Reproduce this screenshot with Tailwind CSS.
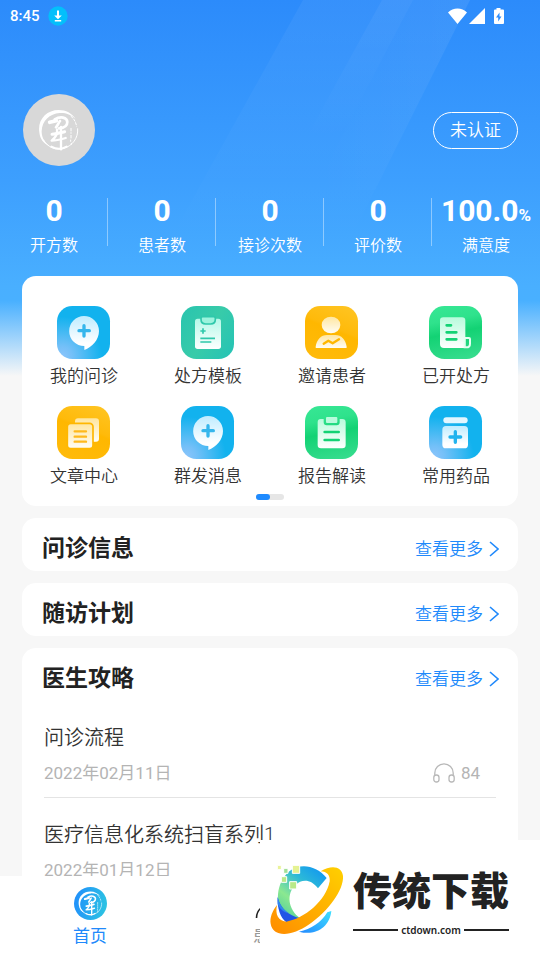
<!DOCTYPE html>
<html lang="zh-CN">
<head>
<meta charset="utf-8">
<meta name="viewport" content="width=device-width, initial-scale=1">
<title>首页</title>
<script src="https://cdn.jsdelivr.net/npm/@tailwindcss/browser@4"></script>
</head>
<body class="relative flex h-screen flex-col overflow-hidden bg-[#f7f7f7] font-[Roboto,'Noto_Sans_CJK_SC',sans-serif] text-[#333333]">

<!-- shared gradients and symbols -->
<svg class="absolute size-0" aria-hidden="true">
  <defs>
    <radialGradient id="blue" cx="0.1" cy="0.95" r="0.75"><stop offset="0" stop-color="#8ac4fb"/><stop offset="0.25" stop-color="#74c0f8"/><stop offset="1" stop-color="#12b2ee"/></radialGradient>
    <linearGradient id="teal" x1="0" y1="0.2" x2="1" y2="0.8"><stop offset="0" stop-color="#2bc5ae"/><stop offset="0.5" stop-color="#38cba9"/><stop offset="1" stop-color="#27c4b4"/></linearGradient>
    <linearGradient id="amber" x1="0.3" y1="1" x2="0.7" y2="0"><stop offset="0" stop-color="#ffba0a"/><stop offset="0.55" stop-color="#ffb700"/><stop offset="0.6" stop-color="#ffba0a"/><stop offset="1" stop-color="#ffc31f"/></linearGradient>
    <linearGradient id="green" x1="0.4" y1="0" x2="0.6" y2="1"><stop offset="0" stop-color="#35e693"/><stop offset="0.25" stop-color="#2fe28c"/><stop offset="0.5" stop-color="#13d274"/><stop offset="1" stop-color="#35dc8d"/></linearGradient>
    <linearGradient id="fBlue" x1="0" y1="0" x2="0" y2="1"><stop offset="0" stop-color="#bfecff"/><stop offset="0.8" stop-color="#fff"/></linearGradient>
    <linearGradient id="fTeal" x1="0" y1="0" x2="0" y2="1"><stop offset="0" stop-color="#b4f8e8"/><stop offset="1" stop-color="#fff"/></linearGradient>
    <linearGradient id="fAmber" x1="0" y1="0" x2="0" y2="1"><stop offset="0" stop-color="#ffe6a0"/><stop offset="1" stop-color="#fffdf5"/></linearGradient>
    <linearGradient id="fGreen" x1="0" y1="0" x2="0" y2="1"><stop offset="0" stop-color="#b8fbdc"/><stop offset="1" stop-color="#fff"/></linearGradient>
    <linearGradient id="home" x1="0" y1="0.4" x2="1" y2="0.6"><stop offset="0" stop-color="#2190fb"/><stop offset="1" stop-color="#2cc4e2"/></linearGradient>
  </defs>
  <symbol id="seal" viewBox="0 0 126 126">
    <path d="M4 70C-2 32 26 3 62 3c22 0 40 10 51 27C99 16 82 11 65 12 35 14 12 36 11 66c-1 20 11 37 25 46C17 105 6 90 4 70z" fill="#fff"/>
    <path d="M16 92c13 24 39 33 62 26 25-8 43-30 41-60" fill="none" stroke="#fff" stroke-width="3"/>
    <path d="M40 113c14 8 32 8 46 0" fill="none" stroke="#fff" stroke-width="6" stroke-linecap="round"/>
    <path d="M98 21c10 7 16 19 18 32" fill="none" stroke="#fff" stroke-width="3" stroke-dasharray="9 3"/>
    <g fill="none" stroke="#fff" stroke-linecap="round" stroke-linejoin="round">
      <path d="M35 40l20-5" stroke-width="11"/>
      <path d="M50 31c18-10 37-6 38 8 0 12-9 18-25 19" stroke-width="8"/>
      <path d="M66 36c-5 6-6 12-12 19" stroke-width="8"/>
      <path d="M42 76c12 0 24-5 38-8" stroke-width="9"/>
      <path d="M57 62c2 12-5 24-16 33 14 0 28-4 42-8" stroke-width="7"/>
      <path d="M69 54v67" stroke-width="7"/>
      <path d="M99 58v8m0 5v2m0 6v8m-1 6v4m2 6v3" stroke-width="3"/>
    </g>
  </symbol>
  <symbol id="bubble" viewBox="0 0 159 159" preserveAspectRatio="xMinYMid meet">
    <rect width="159" height="159" rx="46" fill="url(#blue)"/>
    <path d="M81 30a45 45 0 0 1 45 45c0 27-21 48-44 57v-12A45 45 0 1 1 81 30z" fill="url(#fBlue)"/>
    <path d="M81 59v31M66 74h31" stroke="#35b6ec" stroke-width="10" stroke-linecap="round"/>
  </symbol>
  <symbol id="chevron" viewBox="0 0 10 16"><path d="M1 1l8 7-8 7" fill="none" stroke="#2089fb" stroke-width="1.6"/></symbol>
</svg>

<main class="relative min-h-0 flex-1 overflow-hidden">
  <div class="absolute inset-x-0 top-0 h-[376px] bg-[linear-gradient(180deg,#2c8bfb_0%,#3d9ffe_48%,#49afff_76%,#49b0ff_80%,#f7f7f7_100%)]" aria-hidden="true">
    <svg class="h-[270px] w-full" viewBox="0 0 540 270" preserveAspectRatio="none">
      <defs>
        <linearGradient id="ray" x1="0" y1="0" x2="0" y2="1"><stop offset="0" stop-color="#fff" stop-opacity="0.05"/><stop offset="1" stop-color="#fff" stop-opacity="0"/></linearGradient>
        <linearGradient id="rayWide" x1="0" y1="0" x2="1" y2="0"><stop offset="0" stop-color="#fff" stop-opacity="0"/><stop offset="1" stop-color="#fff" stop-opacity="0.03"/></linearGradient>
      </defs>
      <path d="M303 0h167L375 190 350 240H170z" fill="url(#ray)"/>
      <path d="M382 0h31L345 130l-40 10z" fill="url(#ray)"/>
      <path d="M413 0h57L375 190h-60l30-60z" fill="url(#rayWide)"/>
    </svg>
  </div>

  <div class="relative">
    <div class="flex h-8 items-center pr-9 pl-[10px] text-white">
      <time class="text-[15px] leading-5 font-medium">8:45</time>
      <svg class="ml-2 size-5" viewBox="0 0 20 20" aria-hidden="true"><circle cx="10" cy="10" r="9.7" fill="#03bffb"/><path d="M9 4.5h2v5h2.8L10 13.2 6.200 9.500H9zM6.800 14h6.400v1.500H6.800z" fill="#fff"/></svg>
      <svg class="ml-auto h-[17px] w-14" viewBox="1 0 56 17" fill="#fff" aria-hidden="true">
        <path d="M1 4.500C6-0.800 15-0.800 20 4.500L10.500 16zM38 0v16H22z"/>
        <path fill-rule="evenodd" d="M49.500 0h4v1.500h2.500q1 0 1 1V15q0 1-1 1h-8q-1 0-1-1V2.500q0-1 1-1h1.500zM52.500 4.500l-3.500 5h2.200v4l3.300-5h-2z"/>
      </svg>
    </div>

    <div class="flex items-center justify-between pt-[62px] pr-[22px] pl-[23px]">
      <div class="flex size-[72px] items-center justify-center rounded-full bg-[#d8d8d8]">
        <svg class="size-[42px]" role="img" aria-label="头像"><use href="#seal"/></svg>
      </div>
      <button type="button" class="h-[37px] rounded-full border border-white px-4 text-[17px] leading-6 font-[350] text-white">未认证</button>
    </div>

    <dl class="mt-[27px] grid grid-cols-5 text-center text-white">
      <div class="relative flex flex-col-reverse"><dt class="mt-[5px] text-base leading-6 font-[350]">开方数</dt><dd class="h-9 text-[30px] leading-9 font-bold">0</dd></div>
      <div class="relative flex flex-col-reverse before:absolute before:top-[5px] before:-left-px before:h-12 before:w-px before:bg-white/40"><dt class="mt-[5px] text-base leading-6 font-[350]">患者数</dt><dd class="h-9 text-[30px] leading-9 font-bold">0</dd></div>
      <div class="relative flex flex-col-reverse before:absolute before:top-[5px] before:-left-px before:h-12 before:w-px before:bg-white/40"><dt class="mt-[5px] text-base leading-6 font-[350]">接诊次数</dt><dd class="h-9 text-[30px] leading-9 font-bold">0</dd></div>
      <div class="relative flex flex-col-reverse before:absolute before:top-[5px] before:-left-px before:h-12 before:w-px before:bg-white/40"><dt class="mt-[5px] text-base leading-6 font-[350]">评价数</dt><dd class="h-9 text-[30px] leading-9 font-bold">0</dd></div>
      <div class="relative flex flex-col-reverse before:absolute before:top-[5px] before:-left-px before:h-12 before:w-px before:bg-white/40"><dt class="mt-[5px] text-base leading-6 font-[350]">满意度</dt><dd class="h-9 text-[30px] leading-9 font-bold">100.0<span class="text-[17px] leading-none">%</span></dd></div>
    </dl>

    <div class="mt-[18px] flex flex-col gap-3 px-[22px]">
      <section class="rounded-[14px] bg-white pt-[30px] pb-1.5">
        <div class="grid grid-cols-4 gap-y-[17px] text-[17px] leading-[26px] font-[350]">
          <a href="#" class="flex flex-col items-center gap-1"><svg class="h-[53px] w-[54px]" aria-hidden="true"><use href="#bubble"/></svg>我的问诊</a>
          <a href="#" class="flex flex-col items-center gap-1">
            <svg class="h-[53px] w-[54px]" viewBox="0 0 159 159" preserveAspectRatio="xMinYMid meet" aria-hidden="true"><rect width="159" height="159" rx="46" fill="url(#teal)"/><rect x="42" y="38" width="78" height="91" rx="8" fill="url(#fTeal)"/><path d="M65 32h33q5 0 5 5v3q0 14-14 14H74q-14 0-14-14v-3q0-5 5-5z" fill="#9cf3dd" stroke="#2fc8ab" stroke-width="5"/><path d="M66 67v16M58 75h16" stroke="#2fc8ab" stroke-width="5"/><path d="M58 97h44M58 108h33" stroke="#2fc8ab" stroke-width="5"/></svg>处方模板</a>
          <a href="#" class="flex flex-col items-center gap-1">
            <svg class="h-[53px] w-[54px]" viewBox="0 0 159 159" preserveAspectRatio="xMinYMid meet" aria-hidden="true"><rect width="159" height="159" rx="46" fill="url(#amber)"/><ellipse cx="78" cy="57" rx="28" ry="25" fill="url(#fAmber)"/><path d="M34 126q-3 0-2-4c3-21 16-35 34-35h25c18 0 31 14 34 35q1 4-2 4z" fill="url(#fAmber)"/><path d="M56 113l14-9 13 8 19-12" fill="none" stroke="#ffb700" stroke-width="7" stroke-linecap="round" stroke-linejoin="round"/></svg>邀请患者</a>
          <a href="#" class="flex flex-col items-center gap-1">
            <svg class="h-[53px] w-[54px]" viewBox="0 0 159 159" preserveAspectRatio="xMinYMid meet" aria-hidden="true"><rect width="159" height="159" rx="46" fill="url(#green)"/><path d="M43 34h56q10 0 10 10v82H45q-12 0-12-12V44q0-10 10-10z" fill="url(#fGreen)"/><path d="M107 96h13q3 0 3 3v14q0 11-11 11h-5z" fill="none" stroke="#e4fff2" stroke-width="6"/><path d="M53 58h13M53 79h29M53 100h29" stroke="#13d274" stroke-width="8" stroke-linecap="round"/></svg>已开处方</a>
          <a href="#" class="flex flex-col items-center gap-1">
            <svg class="h-[53px] w-[54px]" viewBox="0 0 159 159" preserveAspectRatio="xMinYMid meet" aria-hidden="true"><rect width="159" height="159" rx="46" fill="url(#amber)"/><rect x="54" y="37" width="72" height="70" rx="9" fill="url(#fAmber)"/><rect x="31" y="52" width="77" height="76" rx="10" fill="url(#fAmber)" stroke="#ffb700" stroke-width="5"/><path d="M53 76h34M53 92h34M53 107h34" stroke="#ffb91c" stroke-width="7" stroke-linecap="round"/></svg>文章中心</a>
          <a href="#" class="flex flex-col items-center gap-1"><svg class="h-[53px] w-[54px]" aria-hidden="true"><use href="#bubble"/></svg>群发消息</a>
          <a href="#" class="flex flex-col items-center gap-1">
            <svg class="h-[53px] w-[54px]" viewBox="0 0 159 159" preserveAspectRatio="xMinYMid meet" aria-hidden="true"><rect width="159" height="159" rx="46" fill="url(#green)"/><path d="M47 39h9v10q0 9 9 9h30q9 0 9-9V39h8q10 0 10 10v68q0 10-10 10H48q-10 0-10-10V49q0-10 9-10z" fill="url(#fGreen)"/><rect x="63" y="33" width="34" height="18" rx="3" fill="#b8fbdc"/><path d="M59 78h42M59 102h42" stroke="#13d274" stroke-width="8" stroke-linecap="round"/></svg>报告解读</a>
          <a href="#" class="flex flex-col items-center gap-1">
            <svg class="h-[53px] w-[54px]" viewBox="0 0 159 159" preserveAspectRatio="xMinYMid meet" aria-hidden="true"><rect width="159" height="159" rx="46" fill="url(#blue)"/><rect x="43" y="34" width="73" height="18" rx="9" fill="#e2f6ff"/><rect x="40" y="60" width="77" height="67" rx="11" fill="url(#fBlue)"/><path d="M79 77v32M63 93h32" stroke="#20b3ee" stroke-width="10" stroke-linecap="round"/></svg>常用药品</a>
        </div>
        <div class="mx-auto mt-[5px] h-1.5 w-7 rounded-full bg-[#e6e6e6]"><div class="h-full w-1/2 rounded-full bg-[#1f8bff]"></div></div>
      </section>

      <section class="rounded-[14px] bg-white">
        <header class="flex h-[53px] items-center justify-between pt-[9px] pr-[19px] pl-5"><h2 class="text-[23px] leading-8 font-bold text-[#222222]">问诊信息</h2><a href="#" class="flex items-center gap-1.5 text-[17px] leading-6 font-[350] text-[#2089fb]">查看更多<svg class="h-4 w-[10px]" aria-hidden="true"><use href="#chevron"/></svg></a></header>
      </section>

      <section class="rounded-[14px] bg-white">
        <header class="flex h-[53px] items-center justify-between pt-[9px] pr-[19px] pl-5"><h2 class="text-[23px] leading-8 font-bold text-[#222222]">随访计划</h2><a href="#" class="flex items-center gap-1.5 text-[17px] leading-6 font-[350] text-[#2089fb]">查看更多<svg class="h-4 w-[10px]" aria-hidden="true"><use href="#chevron"/></svg></a></header>
      </section>

      <section class="rounded-[14px] bg-white">
        <header class="flex h-[53px] items-center justify-between pt-[9px] pr-[19px] pl-5"><h2 class="text-[23px] leading-8 font-bold text-[#222222]">医生攻略</h2><a href="#" class="flex items-center gap-1.5 text-[17px] leading-6 font-[350] text-[#2089fb]">查看更多<svg class="h-4 w-[10px]" aria-hidden="true"><use href="#chevron"/></svg></a></header>
        <ul class="px-[22px]">
          <li class="border-b border-[#e4e4e4] pt-[22px] pb-3">
            <h3 class="text-xl leading-[30px] font-[350]">问诊流程</h3>
            <div class="mt-2 flex items-center justify-between pr-4 text-[17px] leading-6 text-[#b4b4b4]">
              <time datetime="2022-02-11">2022年02月11日</time>
              <span class="flex items-center gap-1.5"><svg class="h-5 w-[22px]" viewBox="0 0 22 20" fill="none" stroke="#b8b8b8" stroke-width="1.300" aria-hidden="true"><path d="M1.800 13V10a9.200 9.200 0 0 1 18.400 0v3"/><rect x="0.800" y="12" width="5.200" height="7" rx="2.500"/><rect x="16" y="12" width="5.200" height="7" rx="2.500"/></svg>84</span>
            </div>
          </li>
          <li class="pt-[22px] pb-3">
            <h3 class="text-xl leading-[30px] font-[350]">医疗信息化系统扫盲系列1</h3>
            <div class="mt-2 text-[17px] leading-6 text-[#b4b4b4]"><time datetime="2022-01-12">2022年01月12日</time></div>
          </li>
        </ul>
      </section>
    </div>
  </div>
</main>

<nav class="grid h-[84px] shrink-0 grid-cols-3 bg-white text-[17px] leading-6">
  <a href="#" class="flex flex-col items-center gap-1 pt-[11px] text-[#2089fb]">
    <svg class="size-[33px]" viewBox="0 0 33 33" aria-hidden="true"><circle cx="16.500" cy="16.500" r="16.500" fill="url(#home)"/><use href="#seal" x="4" y="4" width="25" height="25"/></svg>首页</a>
  <a href="#" class="flex flex-col items-center gap-1 pt-[11px] text-[#999999]">
    <svg class="size-[33px]" viewBox="0 0 33 33" fill="none" stroke="#222" stroke-width="1.600" aria-hidden="true"><circle cx="16.500" cy="11" r="6"/><path d="M2.500 31c0-8 6-13 14-13s14 5 14 13"/></svg>患者</a>
</nav>

<aside class="absolute right-0 bottom-0 flex h-[120px] w-[280px] items-center bg-white">
  <svg class="h-20 w-[90px] shrink-0" viewBox="30 90 270 240" aria-hidden="true">
    <defs>
      <linearGradient id="ringC" x1="0.9" y1="0" x2="0.2" y2="1"><stop offset="0" stop-color="#0f94f2"/><stop offset="0.35" stop-color="#2cb9d8"/><stop offset="0.7" stop-color="#8be890"/><stop offset="1" stop-color="#54cf9b"/></linearGradient>
      <linearGradient id="ringO" x1="1" y1="0" x2="0" y2="1"><stop offset="0" stop-color="#ffd000"/><stop offset="1" stop-color="#ff8c00"/></linearGradient>
      <linearGradient id="ringB" x1="0" y1="1" x2="1" y2="0"><stop offset="0" stop-color="#2389ff"/><stop offset="1" stop-color="#3ee0ff"/></linearGradient>
    </defs>
    <path d="M204 175l26-31C198 105 150 99 118 124 84 152 73 207 96 253c10 20 25 27 55 12-38-27-42-74-15-100 20-19 47-18 68 10z" fill="url(#ringC)"/>
    <path d="M83 201c8 35 32 55 67 64-14 9-29 13-41 12-18-14-28-43-26-76z" fill="#2255e6"/>
    <path d="M83 201c6 24 17 38 34 49-18-4-29-15-34-28z" fill="#2f87ed"/>
    <path d="M244 243c-5 48-47 76-97 62 37-8 66-27 85-58z" fill="url(#ringB)"/>
    <path d="M212 124c33-21 64-15 67 14 3 42-45 106-101 145-55 38-109 39-116-2-3-18 5-38 19-56-6 29 3 47 28 50 54-9 119-62 130-121 2-18-8-29-27-30z" fill="url(#ringO)"/>
    <g stroke="#fff" stroke-width="3"><path d="M94 140h16v17H94zM119 155h21v22h-21z" fill="#b9e989"/><path d="M127 106h22v24h-22z" fill="#e5f292"/><path d="M101 115h13v15h-13z" fill="#a2e096"/><path d="M82 106h12v13H82z" fill="#eaf39a"/></g>
  </svg>
  <div class="ml-[3px] w-[156px] font-['Noto_Sans_CJK_SC',sans-serif] text-[#222222]">
    <p class="text-[39px] leading-[52px] font-black whitespace-nowrap">传统下载</p>
    <p class="mt-2 flex items-center gap-[3px] font-['Noto_Sans',sans-serif] text-[10px] leading-4 font-semibold before:h-0.5 before:flex-1 before:bg-[#222222] after:h-0.5 after:flex-1 after:bg-[#222222]">ctdown.com</p>
  </div>
</aside>

</body>
</html>
